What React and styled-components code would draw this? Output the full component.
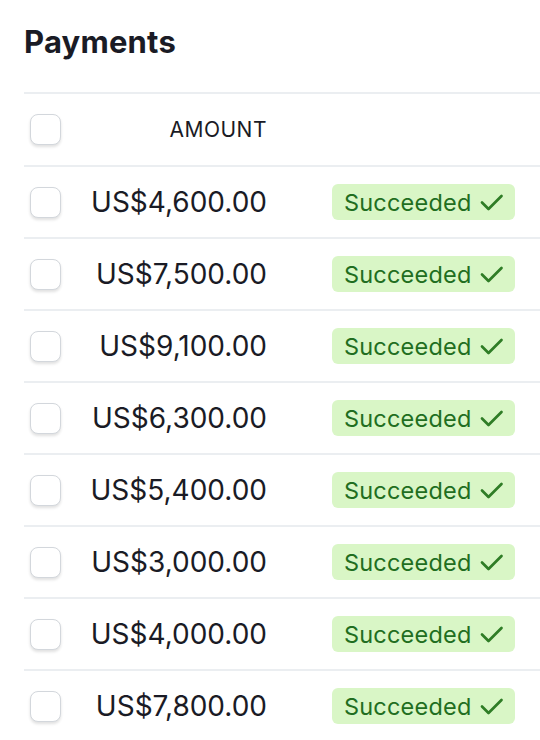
import React from 'react'
import styled, { createGlobalStyle } from 'styled-components'

const GlobalStyle = createGlobalStyle`
  body {
    margin: 0;
    background: #fff;
    font-family: Inter, "Liberation Sans", sans-serif;
    color: #1a1b25;
  }
`

const Page = styled.div`
  padding: 23px 0 0 24px;
`

const Title = styled.h1`
  margin: 0 0 31px 0;
  font-size: 31px;
  font-weight: 700;
  line-height: 38px;
  letter-spacing: 0.2px;
`

const Table = styled.div`
  border-top: 2px solid #ebeef1;
`

const Row = styled.div`
  display: grid;
  grid-template-columns: 56px 187px 1fr;
  align-items: center;
  height: ${({ $head }) => ($head ? '71px' : '70px')};
  border-bottom: 2px solid #ebeef1;
`

const Check = styled.span`
  display: block;
  width: 29px;
  height: 29px;
  margin-left: 6px;
  border: 1px solid #d3d7dc;
  border-radius: 8px;
  box-shadow: 0 2px 3px rgba(0, 0, 0, 0.12);
  background: #fff;
`

const Amount = styled.div`
  text-align: right;
  font-size: ${({ $head }) => ($head ? '21px' : '28px')};
  letter-spacing: ${({ $head }) => ($head ? '0.5px' : '0')};
  font-weight: 400;
`

const Status = styled.div`
  padding-left: 65px;
`

const Badge = styled.span`
  display: inline-flex;
  align-items: center;
  gap: 7px;
  height: 36px;
  padding: 0 11px 0 12px;
  border-radius: 6px;
  background: #d9f6c6;
  color: #216e1f;
  font-size: 23.5px;
  letter-spacing: 0.2px;
`

const CheckIcon = () => (
  <svg width="25" height="24" viewBox="0 0 25 24" fill="none">
    <path d="M3 12.5l6.5 6.5L22.5 6" stroke="#2f7d26" strokeWidth="2.7" strokeLinecap="round" strokeLinejoin="round" />
  </svg>
)

const payments = ['US$4,600.00', 'US$7,500.00', 'US$9,100.00', 'US$6,300.00', 'US$5,400.00', 'US$3,000.00', 'US$4,000.00', 'US$7,800.00']

const App = () => {
  return (
    <Page>
      <GlobalStyle />
      <Title>Payments</Title>
      <Table>
        <Row $head>
          <Check />
          <Amount $head>AMOUNT</Amount>
          <div />
        </Row>
        {payments.map((amount, index) => {
          return (
            <Row key={index}>
              <Check />
              <Amount>{amount}</Amount>
              <Status>
                <Badge>Succeeded <CheckIcon /></Badge>
              </Status>
            </Row>
          )
        })}
      </Table>
    </Page>
  )
}

export default App
